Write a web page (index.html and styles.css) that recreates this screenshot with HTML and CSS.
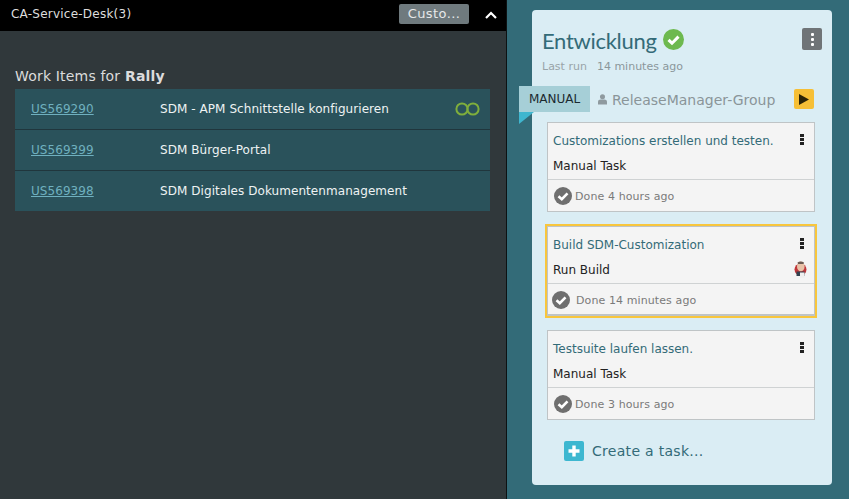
FILE: index.html
```html
<!DOCTYPE html>
<html>
<head lang="en">
    <meta charset="UTF-8">
    <title>Release</title>
    <link rel="stylesheet" href="styles.css">
</head>
<body>
<div class="page">
    <div class="left">
        <div class="top-bar">
            <span class="top-title">CA-Service-Desk(3)</span>
            <span class="top-btn">Custo...</span>
            <svg class="chevron" width="12" height="8" viewBox="0 0 12 8"><path d="M1 7 L6 2 L11 7" fill="none" stroke="#fff" stroke-width="2.2"/></svg>
        </div>
        <div class="items">
            <div class="items-title">Work Items for <b>Rally</b></div>
            <div class="item">
                <a class="item-id">US569290</a>
                <span class="item-name">SDM - APM Schnittstelle konfigurieren</span>
                <svg class="item-icon" width="25" height="14" viewBox="0 0 25 14"><circle cx="7" cy="7" r="5.6" fill="none" stroke="#7fae3c" stroke-width="2"/><circle cx="18" cy="7" r="5.6" fill="none" stroke="#7fae3c" stroke-width="2"/></svg>
            </div>
            <div class="item">
                <a class="item-id">US569399</a>
                <span class="item-name">SDM Bürger-Portal</span>
            </div>
            <div class="item">
                <a class="item-id">US569398</a>
                <span class="item-name">SDM Digitales Dokumentenmanagement</span>
            </div>
        </div>
    </div>
    <div class="right">
        <div class="stage">
            <div class="stage-head">
                <div class="stage-title">
                    <span class="stage-name">Entwicklung</span>
                    <svg class="stage-ok" width="21" height="21" viewBox="0 0 21 21"><circle cx="10.5" cy="10.5" r="10.5" fill="#6db94f"/><path d="M5.5 10.8 L9 14.2 L15.5 7.6" fill="none" stroke="#fff" stroke-width="3"/></svg>
                </div>
                <div class="menu-btn"><i></i><i></i><i></i></div>
            </div>
            <div class="last-run"><span>Last run</span><span>14 minutes ago</span></div>
            <div class="group-row">
                <div class="tag">MANUAL</div>
                <svg class="person" width="9" height="11" viewBox="0 0 10 12"><circle cx="5" cy="3" r="2.8" fill="#8f9a9f"/><path d="M0 11.5 V8.5 C0 6.8 1.5 6 3 6 H7 C8.5 6 10 6.8 10 8.5 V11.5 Z" fill="#8f9a9f"/></svg>
                <span class="group-name">ReleaseManager-Group</span>
                <div class="play-btn"><svg width="10" height="11" viewBox="0 0 10 11"><path d="M0 0 L10 5.5 L0 11 Z" fill="#2b2306"/></svg></div>
            </div>
            <div class="tasks">
                <div class="task">
                    <div class="task-body">
                        <div class="task-head">
                            <span class="task-name">Customizations erstellen und testen.</span>
                            <div class="dots"><i></i><i></i><i></i></div>
                        </div>
                        <div class="task-type"><span>Manual Task</span></div>
                    </div>
                    <div class="task-foot">
                        <svg width="18" height="18" viewBox="0 0 18 18"><circle cx="9" cy="9" r="9" fill="#6f6f6f"/><path d="M4.5 9.2 L7.8 12.2 L13.5 6.4" fill="none" stroke="#fff" stroke-width="2.6"/></svg>
                        <span>Done 4 hours ago</span>
                    </div>
                </div>
                <div class="task selected">
                    <div class="task-body">
                        <div class="task-head">
                            <span class="task-name">Build SDM-Customization</span>
                            <div class="dots"><i></i><i></i><i></i></div>
                        </div>
                        <div class="task-type">
                            <span>Run Build</span>
                            <svg class="jenkins" width="13" height="17" viewBox="0 0 13 17">
                                <ellipse cx="6.5" cy="8.5" rx="6" ry="6" fill="#c0363a"/>
                                <ellipse cx="6.8" cy="5.5" rx="3.8" ry="5" fill="#e8c2a8"/>
                                <path d="M3.5 1.5 Q6.5 -0.5 10 1.5 L9.5 3 H4 Z" fill="#6b5a52"/>
                                <path d="M2.5 10.5 H10.5 V15 H2.5 Z" fill="#33414f"/>
                                <path d="M6 11.5 H10.5 V16.8 H6 Z" fill="#efefef"/>
                            </svg>
                        </div>
                    </div>
                    <div class="task-foot wide">
                        <svg width="18" height="18" viewBox="0 0 18 18"><circle cx="9" cy="9" r="9" fill="#6f6f6f"/><path d="M4.5 9.2 L7.8 12.2 L13.5 6.4" fill="none" stroke="#fff" stroke-width="2.6"/></svg>
                        <span>Done 14 minutes ago</span>
                    </div>
                </div>
                <div class="task">
                    <div class="task-body">
                        <div class="task-head">
                            <span class="task-name">Testsuite laufen lassen.</span>
                            <div class="dots"><i></i><i></i><i></i></div>
                        </div>
                        <div class="task-type"><span>Manual Task</span></div>
                    </div>
                    <div class="task-foot">
                        <svg width="18" height="18" viewBox="0 0 18 18"><circle cx="9" cy="9" r="9" fill="#6f6f6f"/><path d="M4.5 9.2 L7.8 12.2 L13.5 6.4" fill="none" stroke="#fff" stroke-width="2.6"/></svg>
                        <span>Done 3 hours ago</span>
                    </div>
                </div>
            </div>
            <div class="create">
                <div class="plus"><svg width="12" height="12" viewBox="0 0 12 12"><path d="M6 0.5 V11.5 M0.5 6 H11.5" stroke="#fff" stroke-width="3.4"/></svg></div>
                <span>Create a task...</span>
            </div>
        </div>
    </div>
</div>
</body>
</html>
```
FILE: styles.css
```css
*{
    margin: 0;
    padding: 0;
    box-sizing: border-box;
}
html,body{
    height: 100%;
    overflow: hidden;
}
body{
    font-family: "DejaVu Sans", sans-serif;
    font-size: 12px;
}
.page{
    display: flex;
    height: 499px;
}
.left{
    width: 507px;
    background: #30383b;
    border-right: 1px solid #0d1213;
}
.top-bar{
    display: flex;
    align-items: center;
    height: 31px;
    padding: 0 8px 4px 11px;
    background: #000;
    color: #ddd;
}
.top-title{
    flex: 1;
    letter-spacing: 0.23px;
}
.top-btn{
    width: 70px;
    height: 20px;
    line-height: 20px;
    margin-right: 16px;
    text-align: center;
    font-size: 13px;
    color: #e6e8e9;
    background: #6f7a7e;
    border-radius: 2px;
    letter-spacing: 0.4px;
}
.chevron{
    margin-right: 1px;
    margin-top: 2px;
}
.items{
    padding: 37px 16px 0 15px;
}
.items-title{
    height: 21px;
    font-size: 14px;
    line-height: 16px;
    color: #dcdcdc;
    letter-spacing: 0.18px;
}
.item{
    display: flex;
    align-items: center;
    height: 41px;
    padding: 0 10px 0 16px;
    background: #2a525b;
    border-bottom: 1px solid #20363d;
    color: #eef2f3;
    letter-spacing: 0.06px;
}
.item:last-child{
    height: 40px;
    border-bottom: 0;
}
.item-id{
    width: 129px;
    color: #6fb0bf;
    text-decoration: underline;
}
.item-name{
    flex: 1;
}
.right{
    flex: 1;
    padding: 10px 17px 14px 25px;
    background: #336b78;
}
.stage{
    height: 475px;
    padding: 15px 10px 0 10px;
    background: #daedf4;
    border-radius: 4px;
}
.stage-head{
    display: flex;
    justify-content: space-between;
    align-items: flex-start;
    height: 28px;
}
.stage-title{
    display: flex;
    align-items: flex-start;
    gap: 6px;
}
.stage-name{
    font-family: "Lato", sans-serif;
    font-size: 22px;
    letter-spacing: -0.3px;
    line-height: 32px;
    color: #336b78;
}
.stage-ok{
    margin-top: 4px;
}
.menu-btn{
    display: flex;
    flex-direction: column;
    align-items: center;
    justify-content: center;
    gap: 2px;
    width: 20px;
    height: 22px;
    margin-top: 3px;
    background: #6f7477;
    border-radius: 2px;
}
.menu-btn i{
    width: 3px;
    height: 3px;
    background: #fff;
    border-radius: 1px;
}
.last-run{
    display: flex;
    gap: 10px;
    margin-top: 5px;
    height: 28px;
    font-size: 11px;
    line-height: 17px;
    color: #99a4a8;
}
.last-run span:last-child{
    color: #8b979b;
}
.group-row{
    display: flex;
    align-items: center;
    height: 26px;
    margin-left: -23px;
    padding-right: 8px;
}
.tag{
    position: relative;
    width: 71px;
    height: 26px;
    line-height: 26px;
    text-align: center;
    color: #1c2a30;
    background: #a6cfd7;
}
.tag:after{
    content: "";
    position: absolute;
    left: 0;
    top: 26px;
    border-top: 12px solid #3fb6cf;
    border-left: 15px solid transparent;
    transform: scaleX(-1);
}
.person{
    margin-left: 8px;
}
.group-name{
    flex: 1;
    margin-left: 5px;
    padding-top: 2px;
    font-size: 14px;
    color: #8a9599;
}
.play-btn{
    display: flex;
    align-items: center;
    justify-content: center;
    width: 20px;
    height: 20px;
    background: #f6bf36;
    border-radius: 2px;
}
.tasks{
    display: flex;
    flex-direction: column;
    gap: 14px;
    margin: 10px 7px 0 5px;
}
.task{
    height: 90px;
    background: #f4f4f4;
    border: 1px solid #bfc4c6;
}
.task.selected{
    outline: 2px solid #f8c63d;
    box-shadow: inset 0 -1px 0 #bfc4c6;
}
.task-body{
    height: 57px;
    padding: 10px 7px 0 5px;
    border-bottom: 1px solid #cfd2d3;
}
.task-head{
    display: flex;
    justify-content: space-between;
    height: 24px;
}
.task-name{
    line-height: 17px;
    color: #336b78;
}
.dots{
    display: flex;
    flex-direction: column;
    gap: 1px;
    width: 4px;
    margin-top: 1px;
    margin-right: 3px;
}
.dots i{
    width: 4px;
    height: 3px;
    background: #222;
}
.task-type{
    display: flex;
    justify-content: space-between;
    align-items: center;
    height: 17px;
    color: #222;
}
.task-foot{
    display: flex;
    align-items: center;
    gap: 3px;
    height: 31px;
    padding-left: 6px;
    font-size: 11px;
    color: #7a7a7a;
    letter-spacing: 0.1px;
}
.task-foot span{
    padding-top: 2px;
}
.task-foot.wide{
    gap: 6px;
    padding-left: 4px;
}
.create{
    display: flex;
    align-items: center;
    gap: 8px;
    margin-top: 21px;
    margin-left: 22px;
    font-size: 14px;
    color: #336b78;
    letter-spacing: 0.3px;
}
.plus{
    display: flex;
    align-items: center;
    justify-content: center;
    width: 20px;
    height: 20px;
    background: #3db7d0;
    border-radius: 2px;
}
```
